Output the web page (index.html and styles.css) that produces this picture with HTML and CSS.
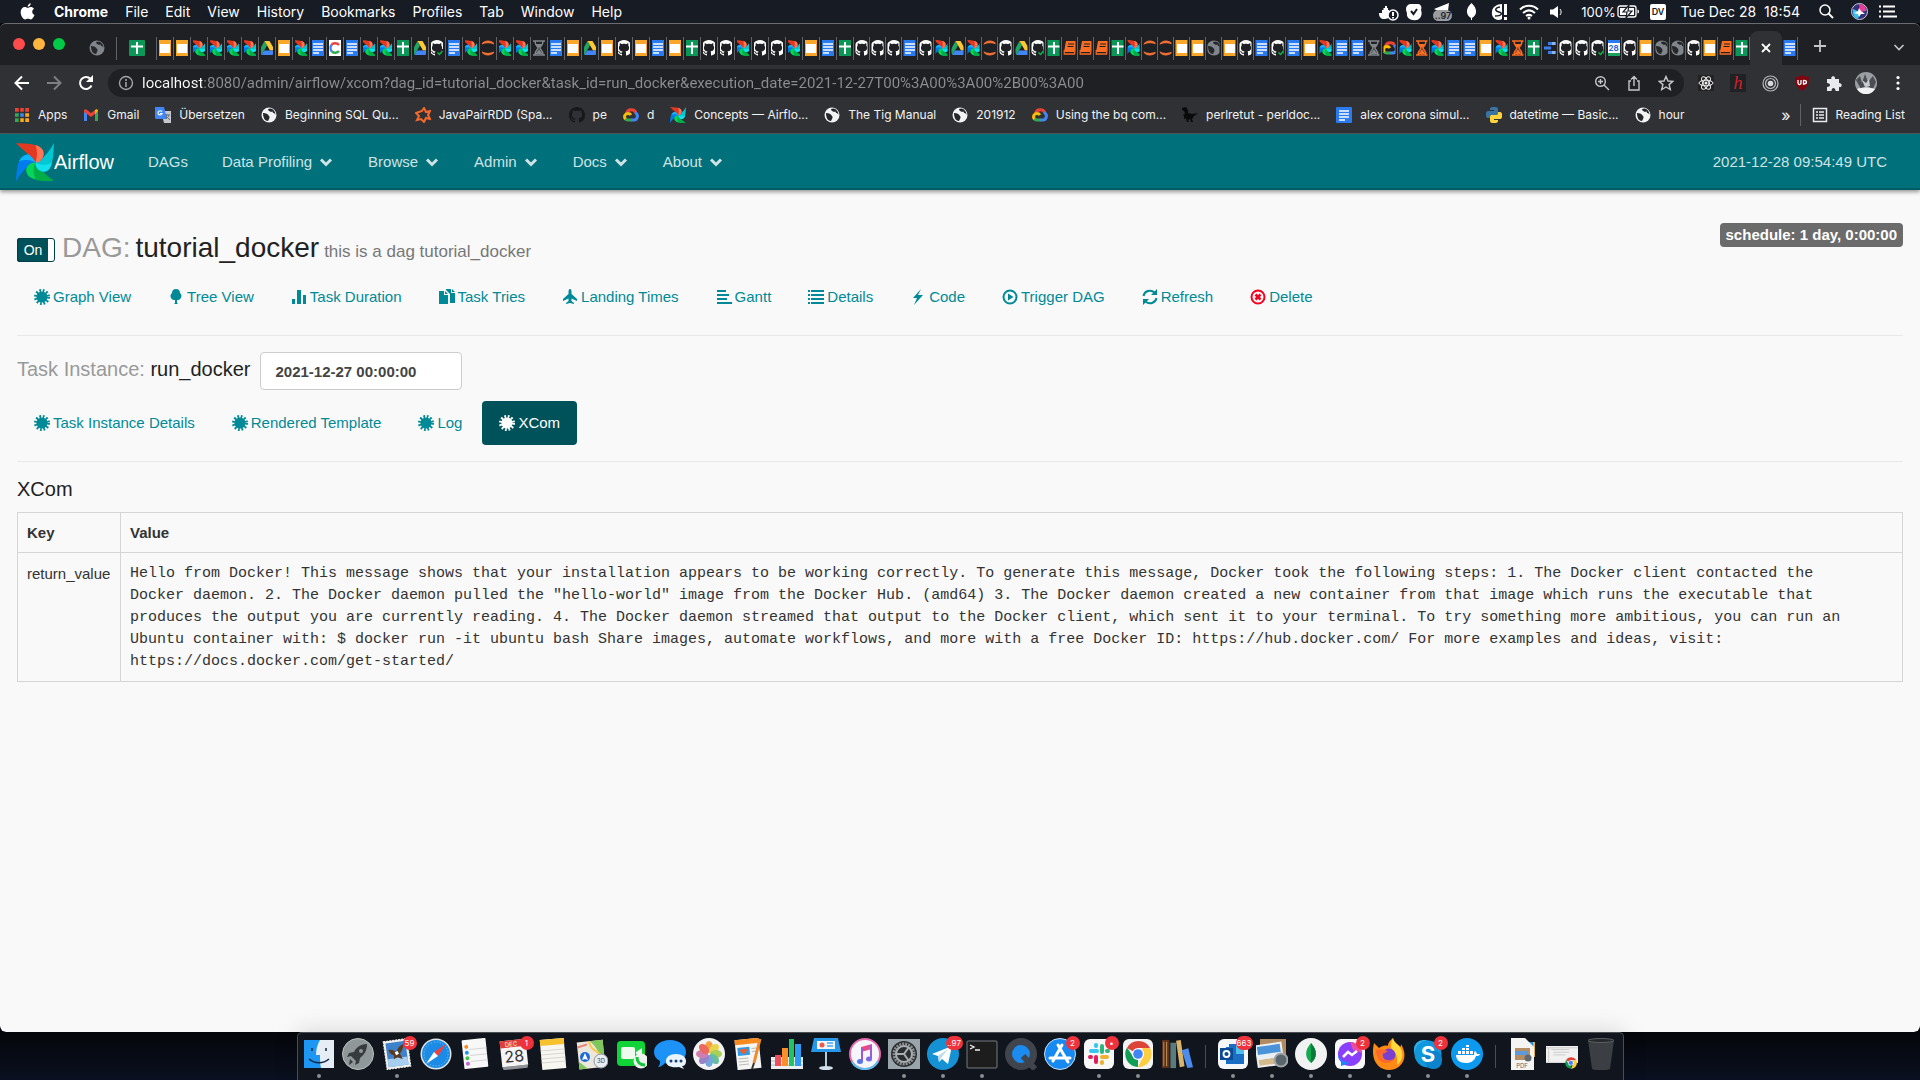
FILE: index.html
```html
<!DOCTYPE html>
<html lang="en">
<head>
    <meta charset="UTF-8">
    <meta name="viewport" content="width=device-width, initial-scale=1.0">
    <title>Airflow - XCom</title>
    <link rel="stylesheet" href="styles.css">
</head>
<body>
    <!-- shared icons -->
    <svg class="sprite" aria-hidden="true">
        <symbol id="i-slides" viewBox="0 0 16 16"><path fill="#f9a72b" d="M0 0h16v16H0z"/><path fill="#fff" d="M3 4h10v9H3z"/></symbol>
        <symbol id="i-docs" viewBox="0 0 16 16"><rect width="16" height="16" rx="1" fill="#2b7bf0"/><path stroke="#fff" stroke-width="1.6" d="M3 4h10M3 7h10M3 10h10M3 13h6"/></symbol>
        <symbol id="i-sheets" viewBox="0 0 16 16"><rect width="16" height="16" rx="1" fill="#0b9757"/><path stroke="#fff" stroke-width="2" d="M2 6.500h12M8 2v12"/></symbol>
        <symbol id="i-airflow" viewBox="0 0 37 37">
            <path fill="#017cee" d="M0 37C1 24 1 14 11 11c5-1 8 3 8 8-7 3-13 8-19 18z"/>
            <path fill="#0cb6ff" d="M3 18c2-5 6-7 10-7 4 1 6 4 6 8-5-3-11-3-16-1z"/>
            <path fill="#00ad46" d="M37 37c-12 0-24 1-27-10 0-5 4-8 9-8 3 6 9 11 18 18z"/>
            <path fill="#04d659" d="M19 35c-6-1-9-4-9-9 1-4 4-7 9-7-3 5-2 11 0 16z"/>
            <path fill="#00c7d4" d="M37 0c-1 13 0 24-10 28-5 0-8-4-8-9 7-3 13-10 18-19z"/>
            <path fill="#11e1ee" d="M35 19c-1 6-4 9-8 9-5-1-8-4-8-9 5 3 11 3 16 0z"/>
            <path fill="#e43921" d="M0 0c13 1 24 0 27 10 0 5-3 8-8 9C16 12 9 10 0 0z"/>
            <path fill="#ff7557" d="M19 2c6 2 8 5 8 9-1 5-4 8-8 8 2-6 2-11 0-17z"/>
        </symbol>
        <symbol id="i-drive" viewBox="0 0 16 16"><path fill="#1fa463" d="M5.500 1L0 11l2.500 4L8 5.500z"/><path fill="#fcc934" d="M5.500 1h5L16 10.500h-5z"/><path fill="#4285f4" d="M5 10.500h11L13.500 15h-11z"/></symbol>
        <symbol id="i-github" viewBox="0 0 16 16"><path fill="currentColor" d="M8 0C3.580 0 0 3.580 0 8c0 3.540 2.290 6.530 5.470 7.590.4.070.55-.17.55-.38 0-.19-.01-.82-.01-1.490-2.010.37-2.530-.49-2.690-.94-.09-.23-.48-.94-.82-1.130-.28-.15-.68-.52-.01-.53.63-.01 1.080.58 1.230.82.72 1.210 1.870.87 2.330.66.07-.52.28-.87.51-1.070-1.780-.2-3.640-.89-3.640-3.950 0-.87.31-1.590.82-2.150-.08-.2-.36-1.020.08-2.120 0 0 .67-.21 2.200.82.64-.18 1.320-.27 2-.27s1.360.09 2 .27c1.530-1.040 2.200-.82 2.200-.82.44 1.100.16 1.920.08 2.120.51.56.82 1.270.82 2.150 0 3.070-1.870 3.750-3.650 3.950.29.25.54.73.54 1.480 0 1.070-.01 1.930-.01 2.200 0 .21.15.46.55.38A8.010 8.010 0 0 0 16 8c0-4.420-3.580-8-8-8z"/></symbol>
        <symbol id="i-github-ok" viewBox="0 0 16 16"><use href="#i-github" width="16" height="16"/><circle cx="12" cy="13" r="4.500" fill="#1f2023"/><path fill="none" stroke="#0fb54a" stroke-width="1.500" d="M8.500 12.500l2 2 3-3.500"/></symbol>
        <symbol id="i-jupyter" viewBox="0 0 16 16"><path fill="#f26f33" d="M1 5c2-6 12-6 14 0-4-2.500-10-2.500-14 0zM1 11c2 6 12 6 14 0-4 2.500-10 2.500-14 0z"/></symbol>
        <symbol id="i-hourglass" viewBox="0 0 16 16"><path fill="none" stroke="currentColor" stroke-width="1.500" d="M2 1h12M2 15h12M4 1c0 5 3 5 3 7s-3 2-3 7M12 1c0 5-3 5-3 7s3 2 3 7"/><path fill="currentColor" d="M4.500 4h7L8 8zM8 9l3.500 5h-7z"/></symbol>
        <symbol id="i-book" viewBox="0 0 16 16"><path fill="#fa6d24" d="M4 1h11l-2.500 11H2z"/><path fill="none" stroke="#fa6d24" stroke-width="1.500" d="M2 10v4h10.500L15 4"/><path stroke="#1f2023" d="M6 4h6M5.500 6.500h6"/></symbol>
        <symbol id="i-cloud" viewBox="0 0 16 16"><g fill="none" stroke-width="3"><path stroke="#ea4335" d="M3.500 6.500c1-5 8-5 9.500-.5"/><path stroke="#4285f4" d="M12 5.500c4 2 2.500 7.500-1 7.500H8"/><path stroke="#34a853" d="M8.500 13H5c-1.500 0-2.500-.7-3-1.500"/><path stroke="#fbbc05" d="M2.500 12C.5 9.500 2 6.500 5 6.500c1.500 0 2.500.8 3 1.500"/></g></symbol>
        <symbol id="i-dataflow" viewBox="0 0 16 16"><path fill="#3b7ded" d="M6 2h8v3H6zM2 6.500h7v3H2zM6 11h8v3H6z"/><path fill="#8ab4f8" d="M10 2h4v3h-4zM10 11h4v3h-4z"/></symbol>
        <symbol id="i-colab" viewBox="0 0 16 16"><path fill="#fff" d="M0 0h16v16H0z"/><g fill="none" stroke-width="2.500"><path stroke="#ea4335" d="M12 5C10 2.500 6 2.800 4.500 5"/><path stroke="#4285f4" d="M4.500 5c-1.500 2-1 5 .5 6.500"/><path stroke="#34a853" d="M5 11.500c2 2 5.500 1.500 7-.5"/></g></symbol>
        <symbol id="i-globe" viewBox="0 0 16 16"><circle cx="8" cy="8" r="7.500" fill="currentColor"/><path class="globe-land" d="M2 6c3 0 5 1 6 3 1 1 .5 2 0 3l-1 2C4 14 2 11 2 6zM7 2c0 2 2 2 3 3 1-1 2-.5 2 1 1 0 2 .5 2.500 2 0-3-2-6-5-6.500z"/></symbol>
        <symbol id="i-burst" viewBox="0 0 16 16"><circle cx="8" cy="8" r="5.600" fill="currentColor"/><circle cx="8" cy="8" r="6.500" fill="none" stroke="currentColor" stroke-width="3" stroke-dasharray="1.700 1.703"/></symbol>
        <symbol id="i-chevron" viewBox="0 0 16 16"><path fill="none" stroke="currentColor" stroke-width="3" d="M3 5.500l5 5 5-5"/></symbol>
    </svg>

    <header class="menubar">
        <svg class="apple" viewBox="0 0 16 18"><path fill="#fff" d="M11.500 4.300c1.300 0 2.600.7 3.400 1.800-2.800 1.700-2.300 5.500.6 6.600-.9 2.300-2.400 4.800-4 4.800-1.200 0-1.600-.7-3-.7s-1.900.7-3 .7C3.200 17.500.7 13.300.7 9.800c0-3.400 2.100-5.500 4.400-5.500 1.300 0 2.400.8 3.300.8.800 0 2-.8 3.100-.8zM8.200 3.900C8.100 2 9.700.4 11.400.2c.2 2-1.500 3.700-3.200 3.700z"/></svg>
        <nav class="menus">
            <button class="menu app-name">Chrome</button>
            <button class="menu">File</button>
            <button class="menu">Edit</button>
            <button class="menu">View</button>
            <button class="menu">History</button>
            <button class="menu">Bookmarks</button>
            <button class="menu">Profiles</button>
            <button class="menu">Tab</button>
            <button class="menu">Window</button>
            <button class="menu">Help</button>
        </nav>
        <div class="status">
            <svg width="20" height="20" viewBox="0 0 20 20"><path fill="#fff" d="M3 8h1.500V6H6V4h2v2h1v2h1v2c2-2 4-1 6 0-2 1-3 1-3 2-2 4-5 5-8 5s-5-2-5-6h3z"/><circle cx="14" cy="13" r="5" fill="#161b24" stroke="#fff" stroke-width="1.500"/><path stroke="#fff" stroke-width="2" d="M14 10v4M14 15v1.500"/></svg>
            <svg width="16" height="18" viewBox="0 0 16 18"><path fill="#fff" d="M4 1h9c2 1 3 3 2 6 2 5-1 10-5 10-5 1-10-2-9-7C-1 6 0 2 4 1z"/><path fill="none" stroke="#161b24" stroke-width="2" d="M5 8l2.500 3L11 6"/></svg>
            <svg width="19" height="18" viewBox="0 0 19 18"><path fill="#fff" d="M16 0L1 6l4 2h10z"/><rect y="7" width="19" height="11" rx="5.500" fill="#9a9ca0"/><text x="10" y="16" text-anchor="middle" font-family="Inter, sans-serif" font-size="9" font-weight="600" fill="#20242c">..97</text></svg>
            <svg class="leaf" width="11" height="17" viewBox="0 0 11 17"><path fill="#fff" d="M5.500 0C12 6 11 12 6 15v2H5v-2C0 12-1 6 5.500 0z"/></svg>
            <svg class="leaf" width="17" height="18" viewBox="0 0 17 18"><path fill="#fff" d="M11 1v15C5 19 0 14 1 9c0-5 5-8 10-8zM13 1h3v11h-3zM13 14h3v3h-3z"/><path fill="none" stroke="#161b24" stroke-width="1.500" d="M9 4c-6 1-5 4-1 5s3 4-4 4"/></svg>
            <svg width="20" height="16" viewBox="0 0 20 16"><g fill="none" stroke="#fff" stroke-width="2"><path d="M1 5.500c5-5 13-5 18 0M4 9c4-3.500 8-3.500 12 0M7 12c2-1.500 4-1.500 6 0"/></g><circle cx="10" cy="14" r="1.500" fill="#fff"/></svg>
            <svg width="14" height="14" viewBox="0 0 14 14"><path fill="#fff" d="M0 4.500h3L8 1v12L3 9.500H0z"/><path fill="none" stroke="#fff" d="M10 4c1.500 2 1.500 4 0 6"/></svg>
            <span class="power">100%
                <svg width="23" height="13" viewBox="0 0 23 13"><rect x="1" y="1" width="18" height="11" rx="2" fill="none" stroke="#fff" stroke-width="1.300"/><path fill="#fff" d="M3 3h14v7H3zM20.500 4.500c2 0 2 4 0 4z"/><path fill="#fff" stroke="#161b24" stroke-width="1.200" d="M12 0L6 7h4l-1 6 6-7h-4z"/></svg>
            </span>
            <span class="lang">DV</span>
            <span class="clock">Tue Dec 28&nbsp; 18:54</span>
            <svg class="search" width="15" height="15" viewBox="0 0 15 15"><circle cx="6" cy="6" r="5" fill="none" stroke="#fff" stroke-width="1.500"/><path stroke="#fff" stroke-width="1.800" d="M9.500 9.500L14 14"/></svg>
            <svg width="17" height="17" viewBox="0 0 17 17"><circle cx="8.500" cy="8.500" r="8" fill="#34307a" stroke="#c9ccd6"/><path fill="#e83e93" d="M8 1c5 0 7 3 7 7l-6 1z"/><path fill="#35c6f0" d="M2 6l7 3-2 7C3 15 1 11 2 6z"/><path fill="#fff" d="M8 5l2 3 4 3-4 0-2 3-1-3-4-1 4-2z"/></svg>
            <svg width="18" height="13" viewBox="0 0 18 13"><path stroke="#fff" stroke-width="2" d="M0 1.500h2M0 6.500h2M0 11.500h2M4 1.500h12M4 6.500h12M4 11.500h14"/></svg>
        </div>
    </header>

    <section class="browser">
        <div class="tabstrip">
            <div class="lights"><span class="light red"></span><span class="light yellow"></span><span class="light green"></span></div>
            <div class="tabs" id="js-tabs"></div>
            <button class="new-tab" aria-label="New tab"><svg width="14" height="14" viewBox="0 0 14 14"><path stroke="#c4c7ca" stroke-width="1.800" d="M7 1v12M1 7h12"/></svg></button>
            <button class="tab-search" aria-label="Search tabs"><svg width="12" height="12" viewBox="0 0 12 12"><path fill="none" stroke="#c4c7ca" stroke-width="1.600" d="M1.500 4L6 8.500 10.500 4"/></svg></button>
        </div>

        <div class="toolbar">
            <button class="tool" aria-label="Back"><svg width="16" height="16" viewBox="0 0 16 16"><path fill="none" stroke="#fff" stroke-width="2" d="M15 8H2M8 1.500L1.500 8 8 14.500"/></svg></button>
            <button class="tool" aria-label="Forward"><svg width="16" height="16" viewBox="0 0 16 16"><path fill="none" stroke="#7d7f83" stroke-width="2" d="M1 8h13M8 1.500L14.500 8 8 14.500"/></svg></button>
            <button class="tool" aria-label="Reload"><svg width="16" height="16" viewBox="0 0 16 16"><path fill="none" stroke="#fff" stroke-width="2" d="M13.500 10.500A6 6 0 1 1 12.500 4"/><path fill="#fff" d="M15 0v7H8z"/></svg></button>
            <div class="omnibox">
                <svg width="16" height="16" viewBox="0 0 16 16"><circle cx="8" cy="8" r="6.500" fill="none" stroke="#a0a3a7" stroke-width="1.400"/><path stroke="#a0a3a7" stroke-width="1.600" d="M8 4v2M8 7v5"/></svg>
                <input class="url" type="text" aria-label="Address" value="localhost:8080/admin/airflow/xcom?dag_id=tutorial_docker&amp;task_id=run_docker&amp;execution_date=2021-12-27T00%3A00%3A00%2B00%3A00">
                <button class="tool" aria-label="Zoom"><svg width="16" height="16" viewBox="0 0 16 16"><g fill="none" stroke="#c4c7ca" stroke-width="1.400"><circle cx="6.500" cy="6.500" r="4.800"/><path d="M10 10l5 5M4 6.500h5M6.500 4v5"/></g></svg></button>
                <button class="tool" aria-label="Share"><svg width="16" height="16" viewBox="0 0 16 16"><path fill="none" stroke="#c4c7ca" stroke-width="1.400" d="M5 6H3v9h10V6h-2M8 11V2M5 4.500l3-3 3 3"/></svg></button>
                <button class="tool" aria-label="Bookmark"><svg width="16" height="16" viewBox="0 0 16 16"><path fill="none" stroke="#c4c7ca" stroke-width="1.400" d="M8 1.500l2 4.500 4.800.4-3.700 3.200 1.200 4.900L8 12l-4.300 2.500 1.200-4.900L1.200 6.400 6 6z"/></svg></button>
            </div>
            <button class="tool" aria-label="React"><svg width="16" height="16" viewBox="0 0 16 16"><path fill="#222" d="M0 0h16v16H0z"/><g fill="none" stroke="#eee"><ellipse cx="8" cy="8" rx="7" ry="2.800"/><ellipse cx="8" cy="8" rx="7" ry="2.800" transform="rotate(60 8 8)"/><ellipse cx="8" cy="8" rx="7" ry="2.800" transform="rotate(120 8 8)"/></g><circle cx="8" cy="8" r="1.500" fill="#eee"/></svg></button>
            <button class="tool"><span class="h-ext">h</span></button>
            <button class="tool" aria-label="Rings"><svg width="17" height="17" viewBox="0 0 17 17"><g fill="none" stroke="#b6b8bb" stroke-width="1.200"><circle cx="8.500" cy="8.500" r="7.500"/><circle cx="8.500" cy="8.500" r="5"/></g><circle cx="8.500" cy="8.500" r="2.800" fill="#d6d8da"/></svg></button>
            <button class="tool" aria-label="Blocker"><svg width="16" height="16" viewBox="0 0 16 16"><path fill="#800610" d="M8 0c2 1 4 2 7 2 0 7-1 10-7 14C2 12 1 9 1 2c3 0 5-1 7-2z"/><path fill="none" stroke="#fff" stroke-width="1.300" d="M4 5v3c0 2 3 2 3 0V5M9.500 5v4c4 0 4-4 0-3.500"/></svg></button>
            <button class="tool" aria-label="Extensions"><svg width="16" height="16" viewBox="0 0 16 16"><path fill="#e8eaed" d="M1 4h4.500C4 1 9 0 9 3v1h4v4c4 0 3 5 0 4v4H9.500c0-4-4-4-4 0H1v-4c4 0 4-4 0-4z"/></svg></button>
            <button class="tool" aria-label="Profile"><svg width="22" height="22" viewBox="0 0 22 22"><circle cx="11" cy="11" r="11" fill="#9b9ea2"/><path fill="#4a4d52" d="M1 8l4-4 2 7 3-9 3 8 5-6 3 6-3 7-6-3-6 3z"/><path fill="#c9ccd0" d="M7 8l4 3 3-4 1 7-5 1z"/><path fill="#f2f2f4" d="M2 17c5-2 12-2 18 0-4 7-14 7-18 0z"/></svg></button>
            <button class="tool" aria-label="More"><svg width="4" height="16" viewBox="0 0 4 16"><g fill="#fff"><circle cx="2" cy="2.500" r="1.600"/><circle cx="2" cy="8" r="1.600"/><circle cx="2" cy="13.500" r="1.600"/></g></svg></button>
        </div>

        <nav class="bookmarks">
            <a href="#" class="bookmark"><svg viewBox="0 0 16 16"><path fill="#ea4335" d="M1 1h4v4H1zM6 1h4v4H6zM11 1h4v4h-4z"/><path fill="#34a853" d="M1 6h4v4H1zM1 11h4v4H1z"/><path fill="#4285f4" d="M6 6h4v4H6z"/><path fill="#fbab1c" d="M11 6h4v4h-4zM11 11h4v4h-4zM6 11h4v4H6z"/><path stroke="#303135" stroke-width="1.500" d="M5.500 0v16M10.500 0v16M0 5.500h16M0 10.500h16"/></svg>Apps</a>
            <a href="#" class="bookmark"><svg viewBox="0 0 16 16"><path fill="#4285f4" d="M1 4l3 2v8H1z"/><path fill="#34a853" d="M12 6l3-2v10h-3z"/><path fill="#ea4335" d="M1 3c1-1 2-1 3 0l4 3 4-3v4l-4 3-4-3-3-2z"/><path fill="#fbbc05" d="M12 3c1-1 3-1 3 1l-3 3z"/></svg>Gmail</a>
            <a href="#" class="bookmark"><svg viewBox="0 0 16 16"><path fill="#c4c8cc" d="M6 4h10v12H9z"/><path fill="#4285f4" d="M0 0h9l3 12H1L0 11z"/><path fill="none" stroke="#fff" stroke-width="1.200" d="M7 4.500C5 3 3 4 3 6s3.500 3 4 .5H5"/><path fill="none" stroke="#607080" d="M10 8h5M12 7l-1 5M14 8c0 2-2 3-3 3M12 10l3 3"/></svg>Übersetzen</a>
            <a href="#" class="bookmark"><svg><use href="#i-globe"/></svg>Beginning SQL Qu...</a>
            <a href="#" class="bookmark"><svg viewBox="0 0 16 16"><path fill="none" stroke="#f4692a" stroke-width="2" d="M7 4l2-3 2 4 4-1-2 4 2 4-4-1-2 4-3-3-4 1 2-4-3-3z"/></svg>JavaPairRDD (Spa...</a>
            <a href="#" class="bookmark"><svg class="dark-mark"><use href="#i-github"/></svg>pe</a>
            <a href="#" class="bookmark"><svg><use href="#i-cloud"/></svg>d</a>
            <a href="#" class="bookmark"><svg><use href="#i-airflow"/></svg>Concepts — Airflo...</a>
            <a href="#" class="bookmark"><svg><use href="#i-globe"/></svg>The Tig Manual</a>
            <a href="#" class="bookmark"><svg><use href="#i-globe"/></svg>201912</a>
            <a href="#" class="bookmark"><svg><use href="#i-cloud"/></svg>Using the bq com...</a>
            <a href="#" class="bookmark"><svg viewBox="0 0 16 16"><path fill="#08090a" d="M0 1l4-1 2 3v3l4 1 6-1-4 3-2 3 1 3H9l-1-3-2 1 1 2H5l-1-4-2 1V9L1 8l2-1-1-3-2-1z"/></svg>perlretut - perldoc...</a>
            <a href="#" class="bookmark"><svg><use href="#i-docs"/></svg>alex corona simul...</a>
            <a href="#" class="bookmark"><svg viewBox="0 0 16 16"><path fill="#3873a6" d="M4 2c0-3 8-3 8 0v4c0 2-1 2-3 2H6c-2 0-2 1-2 3H2c-3 0-3-7 0-7h6V3H4z"/><path fill="#ffd43b" d="M12 14c0 3-8 3-8 0v-4c0-2 1-2 3-2h3c2 0 2-1 2-3h2c3 0 3 7 0 7H8v1h4z"/></svg>datetime — Basic...</a>
            <a href="#" class="bookmark"><svg><use href="#i-globe"/></svg>hour</a>
            <button class="overflow" aria-label="More bookmarks">»</button>
            <a href="#" class="bookmark reading"><svg viewBox="0 0 16 16"><path fill="none" stroke="#e8eaed" stroke-width="1.500" d="M1.500 1.500h13v13h-13z"/><path stroke="#e8eaed" stroke-width="1.500" d="M4 5h2M7 5h5M4 8h2M7 8h5M4 11h2M7 11h5"/></svg>Reading List</a>
        </nav>

        <div class="page">
            <nav class="navbar">
                <a href="#" class="brand"><svg width="38" height="38"><use href="#i-airflow"/></svg>Airflow</a>
                <a href="#" class="nav-link">DAGs</a>
                <a href="#" class="nav-link">Data Profiling<svg><use href="#i-chevron"/></svg></a>
                <a href="#" class="nav-link">Browse<svg><use href="#i-chevron"/></svg></a>
                <a href="#" class="nav-link">Admin<svg><use href="#i-chevron"/></svg></a>
                <a href="#" class="nav-link">Docs<svg><use href="#i-chevron"/></svg></a>
                <a href="#" class="nav-link">About<svg><use href="#i-chevron"/></svg></a>
                <span class="utc">2021-12-28 09:54:49 UTC</span>
            </nav>

            <main class="content">
                <div class="dag-header">
                    <label class="toggle"><input type="checkbox" checked><span>On</span></label>
                    <h3 class="dag-title"><span class="muted">DAG:</span> <span>tutorial_docker</span> <small>this is a dag tutorial_docker</small></h3>
                    <a href="#" class="schedule">schedule: 1 day, 0:00:00</a>
                </div>

                <ul class="pills">
                    <li><a href="#"><svg><use href="#i-burst"/></svg>Graph View</a></li>
                    <li><a href="#"><svg viewBox="0 0 16 16"><path fill="currentColor" d="M8 0c3 0 4 2 4 4 3 2 1 7-2 7H9v3l1 1H6l1-1v-3H6c-3 0-5-5-2-7 0-2 1-4 4-4z"/></svg>Tree View</a></li>
                    <li><a href="#"><svg viewBox="0 0 16 16"><path fill="currentColor" d="M1 10h3v5H1zM6 1h4v14H6zM12 6h3v9h-3z"/></svg>Task Duration</a></li>
                    <li><a href="#"><svg viewBox="0 0 16 16"><path fill="currentColor" d="M0 2h5v4h4v9H0zM6 2l3 3H6zM7 0h5v4h4v10h-5V5L7 1zM13 0l3 3h-3z"/></svg>Task Tries</a></li>
                    <li><a href="#"><svg viewBox="0 0 16 16"><path fill="currentColor" d="M8 0c1 0 1.500 1 1.500 3v2L15 10v2L9.500 9.500V12l2.500 2v1l-4-1-4 1v-1l2.500-2V9.500L1 12v-2l5.500-5V3C6.500 1 7 0 8 0z"/></svg>Landing Times</a></li>
                    <li><a href="#"><svg viewBox="0 0 16 16"><path fill="currentColor" d="M1 1h9v2H1zM1 5h12v2H1zM1 9h10v2H1zM1 13h15v2H1z"/></svg>Gantt</a></li>
                    <li><a href="#"><svg viewBox="0 0 16 16"><path fill="currentColor" d="M0 1h2v2H0zM3 1h13v2H3zM0 5h2v2H0zM3 5h13v2H3zM0 9h2v2H0zM3 9h13v2H3zM0 13h2v2H0zM3 13h13v2H3z"/></svg>Details</a></li>
                    <li><a href="#"><svg viewBox="0 0 16 16"><path fill="currentColor" d="M11 0L3 9h4l-3 7 9-10H8z"/></svg>Code</a></li>
                    <li><a href="#"><svg viewBox="0 0 16 16"><circle cx="8" cy="8" r="6.500" fill="none" stroke="currentColor" stroke-width="2"/><path fill="currentColor" d="M6 4.500L11.500 8 6 11.500z"/></svg>Trigger DAG</a></li>
                    <li><a href="#"><svg viewBox="0 0 16 16"><path fill="none" stroke="currentColor" stroke-width="2" d="M1.500 7c1-5 7-7 11-3.500M14.500 9c-1 5-7 7-11 3.500"/><path fill="currentColor" d="M15 0v6H9zM1 16v-6h6z"/></svg>Refresh</a></li>
                    <li><a href="#"><svg class="danger" viewBox="0 0 16 16"><circle cx="8" cy="8" r="6.500" fill="none" stroke="currentColor" stroke-width="2"/><path stroke="currentColor" stroke-width="2.500" d="M5.500 5.500l5 5M10.500 5.500l-5 5"/></svg>Delete</a></li>
                </ul>
                <hr>

                <div class="task-row">
                    <h4><label for="execution-date"><span class="muted">Task Instance:</span> run_docker</label></h4>
                    <input id="execution-date" class="date" type="text" value="2021-12-27 00:00:00">
                </div>
                <ul class="pills">
                    <li><a href="#"><svg><use href="#i-burst"/></svg>Task Instance Details</a></li>
                    <li><a href="#"><svg><use href="#i-burst"/></svg>Rendered Template</a></li>
                    <li><a href="#"><svg><use href="#i-burst"/></svg>Log</a></li>
                    <li><a href="#" class="active"><svg><use href="#i-burst"/></svg>XCom</a></li>
                </ul>
                <hr>

                <h4 class="xcom-title">XCom</h4>
                <table class="xcom">
                    <thead>
                        <tr><th>Key</th><th>Value</th></tr>
                    </thead>
                    <tbody>
                        <tr>
                            <td>return_value</td>
                            <td class="code">Hello from Docker! This message shows that your installation appears to be working correctly. To generate this message, Docker took the following steps: 1. The Docker client contacted the<br>Docker daemon. 2. The Docker daemon pulled the "hello-world" image from the Docker Hub. (amd64) 3. The Docker daemon created a new container from that image which runs the executable that<br>produces the output you are currently reading. 4. The Docker daemon streamed that output to the Docker client, which sent it to your terminal. To try something more ambitious, you can run an<br>Ubuntu container with: $ docker run -it ubuntu bash Share images, automate workflows, and more with a free Docker ID: https://hub.docker.com/ For more examples and ideas, visit:<br>https://docs.docker.com/get-started/</td>
                        </tr>
                    </tbody>
                </table>
            </main>
        </div>
    </section>

    <footer class="desktop">
        <div class="dock">
            <button class="dock-item running" aria-label="Finder"><svg viewBox="0 0 32 32"><path fill="#e6edf5" d="M1 2h30v28H1z"/><path fill="#1e96f3" d="M1 2h16c-3 5-4 10-4 15h4c0 5 0 9 1 13H1z"/><path fill="none" stroke="#12283f" stroke-width="1.500" d="M6 21c6 5 14 5 20 0M9 10v3M23 10v3"/></svg></button>
            <button class="dock-item" aria-label="Launchpad"><svg viewBox="0 0 32 32"><circle cx="16" cy="16" r="15.500" fill="#8f9799" stroke="#b9c0c2"/><path fill="#363b3e" d="M25 6c-7 0-11 4-13 8l-5 1-2 4 4-1 5 5-1 4 4-2 1-5c4-3 7-7 7-14zM8 21l3 3-4 3z"/><circle cx="19" cy="13" r="2" fill="#8f9799"/></svg></button>
            <button class="dock-item running" aria-label="Mail"><svg viewBox="0 0 32 32"><g transform="rotate(-8 16 16)"><path fill="#f1f1ee" stroke="#f1f1ee" stroke-dasharray="2 1" d="M4 2h24v28H4z"/><path fill="#3e82cb" d="M6 4h20v24H6z"/><path fill="#a7cdef" d="M6 20h20v8H6z"/><path fill="#5c3a20" d="M8 11c4-1 6 2 8 3 1-3 3-6 8-7-1 4-3 7-5 9l2 6-5-3-4 2 1-4c-3-1-4-3-5-6z"/><path fill="#fff" d="M14 14l3-1 1 3-3 1z"/></g></svg><span class="badge">59</span></button>
            <button class="dock-item" aria-label="Safari"><svg viewBox="0 0 32 32"><circle cx="16" cy="16" r="15.500" fill="#dfe4e8"/><circle cx="16" cy="16" r="14" fill="#1c8be6"/><circle cx="16" cy="16" r="12" fill="none" stroke="#8cc9f7" stroke-dasharray="1 2"/><path fill="#f2403f" d="M26 6L14 14l4 4z"/><path fill="#fff" d="M6 26l8-12 4 4z"/></svg></button>
            <button class="dock-item" aria-label="Reminders"><svg viewBox="0 0 32 32"><g transform="rotate(-6 16 16)"><rect x="4" y="1" width="24" height="29" rx="1" fill="#f8f8f8"/><path stroke="#d5d5d5" d="M11 11h17M11 17h17M11 23h17"/><circle cx="8" cy="8" r="2" fill="#f58a23"/><circle cx="8" cy="14" r="2" fill="#2795ee"/><circle cx="8" cy="19.500" r="2" fill="#3dc748"/><circle cx="8" cy="25" r="2" fill="#c661d9"/></g></svg></button>
            <button class="dock-item" aria-label="Calendar"><svg viewBox="0 0 32 32"><g transform="rotate(-6 16 16)"><path fill="#8f9296" d="M3 28h26l-1 3H4z"/><path fill="#f5f5f5" d="M3 2h26v26H3z"/><path fill="#e03c38" d="M3 2h26v7H3z"/><text x="14" y="8" text-anchor="middle" font-family="Inter, sans-serif" font-size="6" fill="#fff">DEC</text><text x="16" y="24" text-anchor="middle" font-family="Inter, sans-serif" font-size="16" fill="#333">28</text></g></svg><span class="badge">1</span></button>
            <button class="dock-item" aria-label="Notes"><svg viewBox="0 0 32 32"><g transform="rotate(-5 16 16)"><path fill="#f7f6f0" d="M4 1h24v30H4z"/><path fill="#f8c22f" d="M4 1h24v6H4z"/><path stroke="#d9d7cf" d="M4 12h24M4 16h24M4 20h24M4 24h24"/></g></svg></button>
            <button class="dock-item" aria-label="Maps"><svg viewBox="0 0 32 32"><g transform="rotate(-6 16 16)"><path fill="#ece7dc" d="M2 3h26v27H2z"/><path fill="#7fc65b" d="M15 3h13v18c-6-4-5-10-13-18zM2 22l8 8H2z"/><path fill="none" stroke="#f8c94a" stroke-width="2" d="M14 3c2 12 10 10 14 20"/><path stroke="#e8857e" stroke-width="2" d="M2 8l10-2"/></g><circle cx="9" cy="19" r="5" fill="#1c6bd8"/><path fill="#fff" d="M9 15l3 7-3-1-3 1z"/><circle cx="25" cy="23" r="7" fill="#e9edf1" stroke="#8b97a5"/><text x="25" y="25" text-anchor="middle" font-family="Inter, sans-serif" font-size="6" fill="#444">3D</text></svg></button>
            <button class="dock-item" aria-label="FaceTime"><svg viewBox="0 0 32 32"><rect x="2" y="3" width="28" height="25" rx="4" fill="#0fd337"/><rect x="6" y="9" width="14" height="12" rx="2" fill="#eefaee"/><path fill="#eefaee" d="M21 14l6-4v10l-6-4z"/><circle cx="26" cy="23" r="7.500" fill="#eef1ee"/><path fill="none" stroke="#12c63a" stroke-width="3" d="M22 19c0 5 3 8 8 8"/></svg></button>
            <button class="dock-item" aria-label="Messages"><svg viewBox="0 0 32 32"><path fill="#1d93f8" d="M16 2c9 0 16 5 16 12s-7 12-16 12c-2 0-3 0-5-1-2 2-4 4-7 4 2-2 2-4 2-6-4-2-6-5-6-9C0 7 7 2 16 2z"/><path fill="#eaf4fc" d="M22 16c6 0 10 3 10 7s-2 5-4 5l2 3-5-2c-8 1-13-1-13-6 0-4 4-7 10-7z"/><g fill="#1b3e78"><circle cx="17" cy="23" r="1.500"/><circle cx="22" cy="23" r="1.500"/><circle cx="27" cy="23" r="1.500"/></g></svg></button>
            <button class="dock-item" aria-label="Photos"><svg viewBox="0 0 32 32"><circle cx="16" cy="16" r="16" fill="#f3f3f3"/><g opacity=".85"><ellipse cx="16" cy="9" rx="4" ry="6" fill="#f79421"/><ellipse cx="16" cy="9" rx="4" ry="6" fill="#e9ce2b" transform="rotate(45 16 16)"/><ellipse cx="16" cy="9" rx="4" ry="6" fill="#9bc93e" transform="rotate(90 16 16)"/><ellipse cx="16" cy="9" rx="4" ry="6" fill="#4fb58b" transform="rotate(135 16 16)"/><ellipse cx="16" cy="9" rx="4" ry="6" fill="#5a9bd8" transform="rotate(180 16 16)"/><ellipse cx="16" cy="9" rx="4" ry="6" fill="#8a6fc0" transform="rotate(225 16 16)"/><ellipse cx="16" cy="9" rx="4" ry="6" fill="#ca6aa5" transform="rotate(270 16 16)"/><ellipse cx="16" cy="9" rx="4" ry="6" fill="#ec5146" transform="rotate(315 16 16)"/></g></svg></button>
            <button class="dock-item" aria-label="Pages"><svg viewBox="0 0 32 32"><g transform="rotate(-6 16 16)"><path fill="#f5f5f3" d="M4 1h24v30H4z"/><path fill="#f88b1e" d="M4 1h24v5H4z"/><path fill="#2c9be8" d="M6 9h12v8H6z"/><path fill="#f45b2c" d="M12 16l-4-4 2-2 2 1 2-1 2 2z"/><path stroke="#bbb" d="M6 20h10M6 23h10M6 26h10M20 11h5M20 14h5"/></g><path stroke="#ee8b2b" stroke-width="3" d="M28 1l-6 24"/><path stroke="#333" stroke-width="2" d="M22 25l-2 6"/></svg></button>
            <button class="dock-item" aria-label="Numbers"><svg viewBox="0 0 32 32"><path fill="#eceef0" d="M0 19h32v12H0z"/><path stroke="#b9bec2" d="M0 23h32M0 27h32"/><path fill="#ee4f5f" d="M4 17h6v11H4z"/><path fill="#f88f2a" d="M11 10h6v18h-6z"/><path fill="#1fc463" d="M18 1h5v27h-5z"/><path fill="#2d9af2" d="M24 6h6v22h-6z"/></svg></button>
            <button class="dock-item" aria-label="Keynote"><svg viewBox="0 0 32 32"><path fill="#2797ea" d="M4 0h24l3 14H1z"/><path fill="#f3f6f8" d="M7 3h18v8H7z"/><circle cx="12" cy="7" r="2.500" fill="#f2594b"/><path stroke="#4aa7ea" stroke-width="1.500" d="M17 5h6M17 8h6"/><path stroke="#b3cddd" stroke-width="2" d="M16 14v16"/><ellipse cx="16" cy="30" rx="7" ry="2" fill="#cfe0ea"/></svg></button>
            <button class="dock-item" aria-label="Music"><svg viewBox="0 0 32 32"><circle cx="16" cy="16" r="15" fill="#f6f6fa" stroke="#e46bb0" stroke-width="2"/><path fill="none" stroke="#57c3f2" stroke-width="2" d="M3 24a15 15 0 0 0 26-1"/><path fill="#ea4a86" d="M12 9l11-3v5l-11 3z"/><path stroke="#9a5bd8" stroke-width="2" d="M13 10v13M22 7v13"/><ellipse cx="11" cy="23.500" rx="3" ry="2.500" fill="#5876ea"/><ellipse cx="20" cy="21" rx="3" ry="2.500" fill="#7d68e2"/></svg></button>
            <button class="dock-item running" aria-label="System Preferences"><svg viewBox="0 0 32 32"><path fill="#9aa4ab" d="M0 1h32v30H0z"/><circle cx="16" cy="16" r="13" fill="#2b2e31"/><circle cx="16" cy="16" r="10" fill="none" stroke="#8b8f93" stroke-width="3" stroke-dasharray="2 1"/><circle cx="16" cy="16" r="8" fill="none" stroke="#a9adb0" stroke-width="2"/><path stroke="#a9adb0" stroke-width="2" d="M16 16H8M16 16l5-7M16 16l5 7"/></svg></button>
            <button class="dock-item running" aria-label="Telegram"><svg viewBox="0 0 32 32"><circle cx="16" cy="16" r="16" fill="#1592d3"/><path fill="#fff" d="M5 16L25 8l-4 18-6-5-3 3-1-6z"/><path fill="#b9dcee" d="M11 18l10-7-7 9-2 4z"/></svg><span class="badge wide-badge">..97</span></button>
            <button class="dock-item running" aria-label="Terminal"><svg viewBox="0 0 32 32"><rect x="1" y="3" width="30" height="27" rx="1" fill="#1d1d1e" stroke="#777c80"/><path fill="none" stroke="#eee" stroke-width="1.300" d="M4 7l4 2-4 2M9 12h5"/></svg></button>
            <button class="dock-item" aria-label="QuickTime"><svg viewBox="0 0 32 32"><circle cx="16" cy="16" r="12.500" fill="#1b8bf0" stroke="#40444c" stroke-width="7"/><path stroke="#40444c" stroke-width="6" d="M18 18l12 13"/></svg></button>
            <button class="dock-item" aria-label="App Store"><svg viewBox="0 0 32 32"><circle cx="16" cy="16" r="15.500" fill="#168af0" stroke="#c8dff3"/><path stroke="#fff" stroke-width="3" stroke-linecap="round" d="M18 7L9 23M14 7l10 17M6 20h20"/></svg><span class="badge">2</span></button>
            <button class="dock-item running" aria-label="Slack"><svg viewBox="0 0 32 32"><rect x="1" y="1" width="30" height="30" rx="6" fill="#f7f7f7"/><g stroke-width="4" stroke-linecap="round"><path stroke="#36c5f0" d="M8 13h6M13 7v1"/><path stroke="#2eb67d" d="M19 8v6M25 13h-1"/><path stroke="#ecb22e" d="M24 19h-5M19 25v-1"/><path stroke="#e01e5a" d="M13 24v-5M7 19h1"/></g></svg><span class="badge">•</span></button>
            <button class="dock-item running" aria-label="Chrome"><svg viewBox="0 0 32 32"><rect x="1" y="1" width="30" height="30" rx="6" fill="#f3f3f3"/><g id="chrome"><path fill="#db4437" d="M16 16L5 10a13 13 0 0 1 23 0H16z"/><path fill="#0f9d58" d="M16 16v13A13 13 0 0 1 5 9.500l6 9z"/><path fill="#ffcd40" d="M16 16l5-6h7a13 13 0 0 1-12 19l5-10z"/><circle cx="16" cy="16" r="6" fill="#fff"/><circle cx="16" cy="16" r="4.800" fill="#4285f4"/></g></svg></button>
            <button class="dock-item" aria-label="calibre"><svg viewBox="0 0 34 32"><path fill="#59301a" d="M1 1h8v30H1z"/><path stroke="#c79a5f" d="M3 3v26M6 3v26"/><path fill="#5a7b7c" d="M10 4h6v27h-6z"/><path fill="#d9b46c" d="M16 2l5-1 4 28-5 1z"/><path fill="#4b8cec" d="M22 12l7-2 5 20-6 1z"/></svg></button>
            <span class="dock-sep"></span>
            <button class="dock-item running" aria-label="Outlook"><svg viewBox="0 0 32 32"><rect x="1" y="1" width="30" height="30" rx="6" fill="#f5f7f9"/><path fill="#1a6fc4" d="M12 6h15v20H9V9h3z"/><path fill="#4fc0ee" d="M19 6h8v10h-8z"/><path fill="#0c4c96" d="M3 10h13v12H3z"/><circle cx="9.500" cy="16" r="3" fill="none" stroke="#fff" stroke-width="1.800"/></svg><span class="badge wide-badge">663</span></button>
            <button class="dock-item running" aria-label="Preview"><svg viewBox="0 0 32 32"><path fill="#b08b62" d="M4 1h26v20H4z"/><g transform="rotate(-8 16 16)"><path fill="#eee" d="M0 5h27v23H0z"/><path fill="#4b93d9" d="M2 7h23v9H2z"/><path fill="#d3b98c" d="M2 20h23v6H2z"/><path fill="#e9f0f5" d="M2 15h23v5H2z"/></g><circle cx="25" cy="22" r="6.500" fill="#59656d" stroke="#a3a7aa" stroke-width="2"/></svg></button>
            <button class="dock-item running" aria-label="MongoDB"><svg viewBox="0 0 32 32"><circle cx="16" cy="16" r="16" fill="#f2f2f2"/><path fill="#13aa52" d="M16 5c7 8 6 15 0 20-6-5-7-12 0-20z"/><path fill="#0b7a3a" d="M16 5c7 8 6 15 0 20z"/></svg></button>
            <button class="dock-item running" aria-label="Messenger"><svg viewBox="0 0 32 32"><rect x="1" y="1" width="30" height="30" rx="6" fill="#f8f8fa"/><circle cx="16" cy="16" r="12" fill="#8a3ffc"/><path fill="#e84ca5" d="M16 4a12 12 0 0 1 12 11l-9-3z"/><path fill="#1a86fb" d="M4 17c2 5 6 7 12 8l-9 3v-5c-2-1-3-4-3-6z"/><path fill="none" stroke="#fff" stroke-width="2.500" d="M9 19l5-5 4 3 5-4"/></svg><span class="badge">2</span></button>
            <button class="dock-item running" aria-label="Firefox"><svg viewBox="0 0 32 32"><path fill="#ff8a16" d="M1 5l5 5c3-2 6-3 9-2 0-4 3-6 5-8 1 5 5 6 7 9 1-1 1-2 1-3 9 15-1 26-12 26S-3 22 1 5z"/><path fill="#ffd83b" d="M20 0c1 5 5 6 7 9 5 9 1 15-3 18 1-9-1-12-6-17 0-3 0-7 2-10z"/><circle cx="16" cy="17" r="6.500" fill="#7a3fd0"/><path fill="#ff6a2a" d="M3 12c5-2 8 0 12 1-3 2-4 3-7 3 1 5 6 8 13 5-6 8-18 4-18-9z"/></svg></button>
            <button class="dock-item running" aria-label="Skype"><svg viewBox="0 0 32 32"><rect x="2" y="2" width="20" height="20" rx="9" fill="#30b0ee"/><circle cx="16" cy="16" r="13.500" fill="#1197dc"/><rect x="13" y="13" width="17" height="18" rx="8" fill="#0c84cc"/><text x="16" y="24" text-anchor="middle" font-family="Inter, sans-serif" font-size="22" font-weight="700" fill="#fff">S</text></svg><span class="badge">2</span></button>
            <button class="dock-item running" aria-label="Docker"><svg viewBox="0 0 32 32"><circle cx="16" cy="16" r="16" fill="#0d99ee"/><path fill="#fff" d="M5 17h18c0-2 0-3 1-4 1 1 2 2 2 3h3c-1 2-2 2-4 2-2 6-6 7-10 7-6 0-10-3-10-8zM7 13h3v3H7zM11 13h3v3h-3zM15 13h3v3h-3zM19 13h3v3h-3zM11 10h3v2h-3zM15 10h3v2h-3zM15 7h3v2h-3z"/></svg></button>
            <span class="dock-sep"></span>
            <button class="dock-item" aria-label="PDF files"><svg viewBox="0 0 32 32"><path fill="#e5b045" d="M20 4h8v15h-8z"/><path fill="#2d8ed4" d="M20 4h6v8h-6z"/><path fill="#f4f4f2" d="M4 0h14l9 9v23H4z"/><path fill="#b58e63" d="M8 10h15v12H8z"/><path fill="#5a9cdb" d="M8 13h13v4H8z"/><circle cx="21" cy="20" r="3.500" fill="#606a70"/><text x="15" y="30" text-anchor="middle" font-family="Inter, sans-serif" font-size="6" fill="#666">PDF</text></svg></button>
            <button class="dock-item" aria-label="Minimized window"><svg viewBox="0 0 36 32"><path fill="#f1f1f1" d="M0 7h36v19H0z"/><path stroke="#c9c9c9" d="M6 11h20M8 14h18M8 17h14M0 9h36M3 9v16"/><use href="#chrome" transform="translate(20 18) scale(.5)"/></svg></button>
            <button class="dock-item" aria-label="Trash"><svg viewBox="0 0 32 32"><path fill="#3b3e42" d="M3 2h26l-4 29c-4 2-14 2-18 0z"/><ellipse cx="16" cy="2.500" rx="13" ry="2" fill="#26292c" stroke="#5b5e62"/></svg></button>
        </div>
    </footer>
    <script src="script.js"></script>
</body>
</html>
```

FILE: script.js
```js
// one letter per open tab, left to right
const icons = {
    S: 'slides', W: 'docs', T: 'sheets', A: 'airflow', D: 'drive', G: 'github', K: 'github-ok',
    J: 'jupyter', H: 'hourglass', O: 'hourglass', B: 'book', P: 'cloud', F: 'dataflow',
    C: 'colab', E: 'globe'
};
const pinned = 'ET';
const open = 'SSAAAADSAWCWAATDKWAJAAHWSDSGS' + 'WSTGGAGGASWTGG' + 'GWGADAJGDKTBBBTAJJSSESGWKW' + 'SAWWHPAOAWWSAOTFGGKLGSEEGSBT';

function makeTab(letter, className) {
    // the calendar tab shows the day
    if (letter === 'L') {
        return `<button class="tab ${className}"><span class="day">28</span></button>`;
    }
    return `<button class="tab ${className}" aria-label="${icons[letter]}"><svg class="fav fav-${letter}"><use href="#i-${icons[letter]}"/></svg></button>`;
}

let html = '';
for (const letter of pinned) {
    html += makeTab(letter, 'pinned');
}
for (let i = 0; i < open.length; i++) {
    html += makeTab(open[i], i < 41 ? 'wide' : '');
}
html += '<button class="tab active" aria-label="Close"><svg class="fav" viewBox="0 0 16 16"><path stroke="#fff" stroke-width="1.800" d="M4 4l8 8M12 4l-8 8"/></svg></button>';
html += makeTab('W', '');
document.querySelector('#js-tabs').innerHTML = html;
```

FILE: styles.css
```css
* {
  box-sizing: border-box;
}
body {
  margin: 0;
  min-height: 100vh;
  display: flex;
  flex-direction: column;
  background-color: #05070c;
  color: #333;
  font-family: "Liberation Sans", Arial, sans-serif;
  font-size: 15px;
  line-height: 22px;
}
button {
  border: none;
  padding: 0;
  background: transparent;
  color: inherit;
  font: inherit;
}
a {
  text-decoration: none;
  color: inherit;
}
svg {
  flex: none;
}
.sprite {
  position: absolute;
  width: 0;
  height: 0;
}

/* mac menu bar */
.menubar {
  display: flex;
  align-items: center;
  height: 23px;
  padding: 0 23px 0 20px;
  background-color: #161b24;
  color: #fff;
  font-family: Inter, sans-serif;
  font-size: 14px;
}
.apple {
  width: 15px;
  height: 17px;
  margin-right: 19px;
}
.menus {
  display: flex;
  gap: 17px;
}
.app-name {
  font-weight: 700;
}
.status {
  display: flex;
  align-items: center;
  gap: 17px;
  margin-left: auto;
}
.status svg {
  margin-left: -6px;
}
.status svg:first-child {
  margin-right: -4px;
}
.status .leaf {
  margin-left: -3px;
}
.status .search {
  margin-right: 6px;
}
.power {
  display: flex;
  align-items: center;
  gap: 7px;
  font-size: 13px;
}
.lang {
  margin: 0 -3px;
  padding: 0 2px;
  border-radius: 2px;
  background-color: #fff;
  color: #161b24;
  font-size: 9px;
  font-weight: 600;
  line-height: 16px;
}
.clock {
  margin-right: 8px;
}

/* browser window */
.browser {
  flex: 1;
  display: flex;
  flex-direction: column;
  border-top: 1px solid #6a6c6f;
  border-radius: 6px;
  overflow: hidden;
  background-color: #1f2023;
}
.tabstrip {
  display: flex;
  height: 41px;
  padding-left: 13px;
  padding-right: 15px;
}
.lights {
  display: flex;
  gap: 8px;
  width: 64px;
  padding-top: 14px;
}
.light {
  width: 12px;
  height: 12px;
  border-radius: 50%;
}
.red {
  background-color: #ff4b4c;
}
.yellow {
  background-color: #ffb63f;
}
.green {
  background-color: #00ca47;
}
.tabs {
  display: flex;
  padding-top: 7px;
}
.tab {
  display: flex;
  align-items: center;
  justify-content: center;
  flex: none;
  width: 16px;
  height: 34px;
  overflow: hidden;
  border-right: 1px solid #505256;
  border-image: linear-gradient(transparent 7px, #606266 7px, #606266 28px, transparent 28px) 1;
}
.fav {
  width: 16px;
  height: 16px;
  clip-path: inset(0 2px);
}
.day {
  width: 12px;
  height: 16px;
  border-top: 3px solid #2b7bf0;
  border-bottom: 3px solid #1aa260;
  background-color: #fff;
  color: #2b6bd8;
  font-family: Inter, sans-serif;
  font-size: 8px;
  font-weight: 700;
  line-height: 10px;
}
.wide {
  width: 17px;
}
.pinned {
  width: 40px;
}
.pinned .fav {
  clip-path: none;
}
.tab.active {
  width: 32px;
  border: none;
  border-radius: 8px 8px 0 0;
  background-color: #303135;
}
.fav-G, .fav-K {
  color: #fff;
}
.fav-H, .fav-E {
  color: #80868b;
}
.fav-O {
  color: #fa6d24;
}
.globe-land {
  fill: #26272a;
}
.new-tab {
  width: 44px;
  padding-top: 7px;
}
.tab-search {
  margin-left: auto;
  padding-top: 7px;
}
.toolbar {
  display: flex;
  align-items: center;
  height: 36px;
  padding: 0 6px;
  background-color: #303135;
}
.tool {
  display: flex;
  align-items: center;
  justify-content: center;
  flex: none;
  width: 32px;
  height: 28px;
}
.omnibox {
  flex: 1;
  display: flex;
  align-items: center;
  height: 28px;
  margin: 0 6px;
  padding-left: 10px;
  padding-right: 2px;
  border-radius: 14px;
  background-color: #1f2023;
}
.url {
  flex: 1;
  margin-left: 8px;
  border: none;
  padding: 0;
  outline: none;
  font-family: Roboto, sans-serif;
  font-size: 15px;
  color: transparent;
  background-image: linear-gradient(90deg, #fff 60px, #8b8d90 60px);
  background-clip: text;
  -webkit-background-clip: text;
}
.h-ext {
  width: 16px;
  height: 18px;
  background-color: #202124;
  color: #d2232a;
  font-family: "Liberation Serif", serif;
  font-size: 18px;
  font-style: italic;
  line-height: 18px;
}
.bookmarks {
  display: flex;
  align-items: center;
  gap: 16px;
  height: 33px;
  padding: 0 15px 4px 14px;
  border-bottom: 1px solid #55585c;
  background-color: #303135;
  color: #f1f3f4;
  font-family: Inter, sans-serif;
  font-size: 12px;
  white-space: nowrap;
}
.bookmark {
  display: flex;
  align-items: center;
  gap: 8px;
}
.bookmark svg {
  width: 16px;
  height: 16px;
}
.bookmark .dark-mark {
  color: #17181a;
}
.overflow {
  margin-left: auto;
  font-size: 16px;
}
.reading {
  margin-left: -7px;
  padding-left: 11px;
  border-left: 1px solid #606266;
}

/* airflow page */
.page {
  flex: 1;
  border-radius: 0 0 6px 6px;
  background-color: #f9f9f9;
}
.navbar {
  display: flex;
  align-items: center;
  height: 56px;
  padding: 2px 33px 0 16px;
  border-bottom: 2px solid #005c64;
  background-color: #00707a;
  box-shadow: 0 2px 4px rgba(0, 0, 0, 0.4);
  color: #cfe3e4;
}
.brand {
  display: flex;
  align-items: center;
  margin-right: 17px;
  color: #fff;
  font-size: 20px;
}
.nav-link {
  display: flex;
  align-items: center;
  gap: 6px;
  padding: 0 17px;
}
.nav-link svg {
  width: 16px;
  height: 16px;
}
.utc {
  margin-left: auto;
}
.content {
  padding: 33px 17px 40px;
}
.dag-header {
  display: flex;
  align-items: flex-start;
  margin-bottom: 8px;
}
.toggle {
  width: 38px;
  height: 24px;
  margin-top: 15px;
  margin-right: 7px;
  border: 1px solid #00262a;
  border-right: 7px solid #fff;
  border-radius: 3px;
  outline: 1px solid #00404a;
  outline-offset: -1px;
  background-color: #00525a;
  color: #fff;
  font-size: 14px;
  text-align: center;
}
.toggle input {
  position: absolute;
  opacity: 0;
}
h3, h4 {
  margin: 0;
  color: #222;
  font-weight: 400;
}
.dag-title {
  flex: 1;
  display: flex;
  align-items: baseline;
  gap: 5px;
  padding-top: 10px;
  font-size: 28px;
  line-height: 30px;
}
.dag-title small {
  color: #777;
  font-size: 17px;
}
.muted {
  color: #999;
}
.schedule {
  padding: 1px 6px;
  border-radius: 4px;
  background-color: #6b6b6b;
  color: #fff;
  font-weight: 700;
}
.pills {
  display: flex;
  gap: 3px;
  margin: 0;
  padding: 0;
  list-style: none;
}
.pills a {
  display: flex;
  align-items: center;
  gap: 3px;
  padding: 11px 17px;
  border-radius: 4px;
  color: #008a97;
}
.pills .active {
  background-color: #00525a;
  color: #fff;
}
.pills svg {
  width: 16px;
  height: 16px;
}
.pills .danger {
  color: #f5001f;
}
hr {
  margin: 16px 0;
  border: none;
  border-top: 1px solid #e8e8e8;
}
.task-row {
  display: flex;
  align-items: center;
  gap: 10px;
  margin-bottom: 11px;
}
.task-row h4 {
  padding-bottom: 4px;
}
h4 {
  font-size: 20px;
}
.date {
  width: 202px;
  height: 38px;
  padding: 0 14px;
  border: 1px solid #ccc;
  border-radius: 4px;
  background-color: #fff;
  color: #444;
  font-family: inherit;
  font-size: 15px;
  font-weight: 700;
}
.xcom-title {
  margin-bottom: 12px;
}
.xcom {
  width: 100%;
  border-collapse: collapse;
}
.xcom th, .xcom td {
  padding: 9px;
  border: 1px solid #d5d5d5;
  text-align: left;
  vertical-align: top;
}
.xcom th {
  padding-bottom: 8px;
}
.xcom td {
  padding-top: 10px;
  padding-bottom: 8px;
}
.xcom th:first-child {
  width: 103px;
}
.code {
  font-family: "Liberation Mono", "Courier New", monospace;
}

/* dock */
.desktop {
  display: flex;
  justify-content: center;
  height: 48px;
  background: linear-gradient(#05060a, #0a1020);
}
.dock {
  position: relative;
  display: flex;
  padding: 0 2px;
  border: 1px solid #4a4d52;
  border-bottom: none;
  border-radius: 5px 5px 0 0;
  background-color: #11151d;
  box-shadow: 0 0 24px rgba(0, 0, 0, 0.15);
}
.dock-item {
  position: relative;
  display: flex;
  justify-content: center;
  width: 39px;
  padding-top: 5px;
}
.dock-item svg {
  width: 32px;
  height: 32px;
}
.running::after {
  content: "";
  position: absolute;
  bottom: 2px;
  width: 4px;
  height: 4px;
  border-radius: 50%;
  background-color: #8b8e93;
}
.badge {
  position: absolute;
  top: 3px;
  right: 0;
  min-width: 14px;
  height: 14px;
  border-radius: 7px;
  background-color: #f0323c;
  color: #fff;
  font-family: Inter, sans-serif;
  font-size: 8px;
  line-height: 14px;
  text-align: center;
}
.wide-badge {
  width: 17px;
}
.dock-sep {
  width: 1px;
  margin: 12px 8px;
  background-color: #4a4d52;
}
```
